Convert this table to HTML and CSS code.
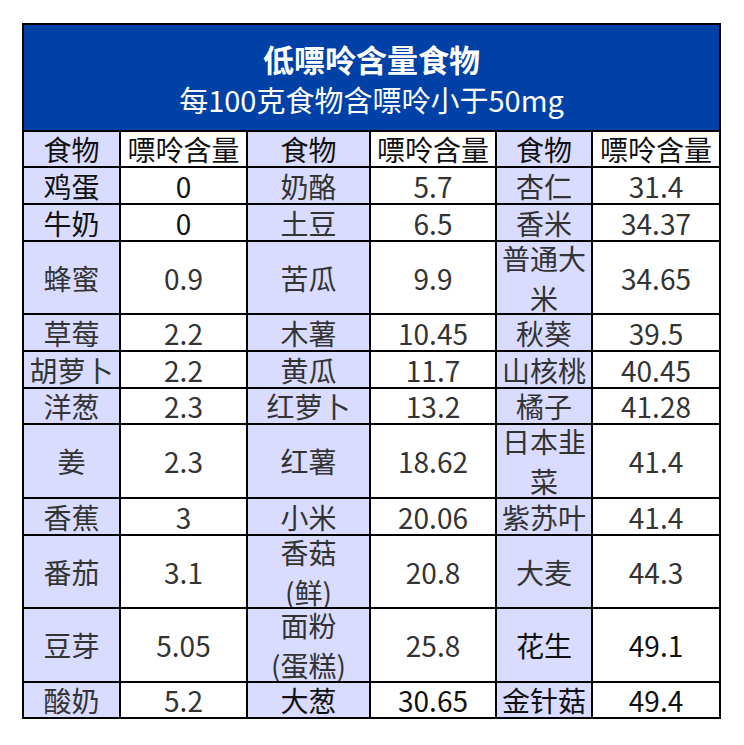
FILE: index.html
```html
<!DOCTYPE html>
<html lang="zh-CN">
<head>
<meta charset="utf-8">
<title>低嘌呤含量食物</title>
<link rel="stylesheet" href="styles.css">
</head>
<body>
<div class="sheet">
  <div class="title">
    <div class="title-main">低嘌呤含量食物</div>
    <div class="title-sub">每100克食物含嘌呤小于50mg</div>
  </div>

  <div class="c name head">食物</div><div class="c val head">嘌呤含量</div>
  <div class="c name head">食物</div><div class="c val head">嘌呤含量</div>
  <div class="c name head">食物</div><div class="c val head">嘌呤含量</div>

  <div class="c name dark">鸡蛋</div><div class="c val dark">0</div>
  <div class="c name">奶酪</div><div class="c val">5.7</div>
  <div class="c name">杏仁</div><div class="c val">31.4</div>

  <div class="c name dark">牛奶</div><div class="c val dark">0</div>
  <div class="c name">土豆</div><div class="c val">6.5</div>
  <div class="c name">香米</div><div class="c val">34.37</div>

  <div class="c name">蜂蜜</div><div class="c val">0.9</div>
  <div class="c name">苦瓜</div><div class="c val">9.9</div>
  <div class="c name wrap">普通大<br>米</div><div class="c val">34.65</div>

  <div class="c name">草莓</div><div class="c val">2.2</div>
  <div class="c name">木薯</div><div class="c val">10.45</div>
  <div class="c name">秋葵</div><div class="c val">39.5</div>

  <div class="c name">胡萝卜</div><div class="c val">2.2</div>
  <div class="c name">黄瓜</div><div class="c val">11.7</div>
  <div class="c name">山核桃</div><div class="c val">40.45</div>

  <div class="c name">洋葱</div><div class="c val">2.3</div>
  <div class="c name">红萝卜</div><div class="c val">13.2</div>
  <div class="c name">橘子</div><div class="c val">41.28</div>

  <div class="c name">姜</div><div class="c val">2.3</div>
  <div class="c name">红薯</div><div class="c val">18.62</div>
  <div class="c name wrap">日本韭<br>菜</div><div class="c val">41.4</div>

  <div class="c name">香蕉</div><div class="c val">3</div>
  <div class="c name">小米</div><div class="c val">20.06</div>
  <div class="c name">紫苏叶</div><div class="c val">41.4</div>

  <div class="c name">番茄</div><div class="c val">3.1</div>
  <div class="c name wrap">香菇<br>(鲜)</div><div class="c val">20.8</div>
  <div class="c name">大麦</div><div class="c val">44.3</div>

  <div class="c name">豆芽</div><div class="c val">5.05</div>
  <div class="c name wrap">面粉<br>(蛋糕)</div><div class="c val">25.8</div>
  <div class="c name dark">花生</div><div class="c val dark">49.1</div>

  <div class="c name">酸奶</div><div class="c val">5.2</div>
  <div class="c name dark">大葱</div><div class="c val dark">30.65</div>
  <div class="c name dark">金针菇</div><div class="c val dark">49.4</div>
</div>
</body>
</html>
```

FILE: styles.css
```css
html, body {
  margin: 0;
  padding: 0;
  background: #ffffff;
}

body {
  font-family: "Noto Sans CJK SC", "Noto Sans", sans-serif;
}

.sheet {
  margin: 23px 0 0 22px;
  width: 699px;
  box-sizing: border-box;
  padding: 2px;
  background: #000000;
  display: grid;
  grid-template-columns: 95px 125px 121px 124px 94px 126px;
  grid-template-rows: 105px 34px 35px 35px 71px 35px 35px 34px 72px 35px 71px 72px 34px;
  gap: 2px;
}

.title {
  grid-column: 1 / -1;
  background: #0041a7;
  color: #ffffff;
  display: flex;
  flex-direction: column;
  align-items: center;
  justify-content: center;
  padding-top: 3px;
  box-sizing: border-box;
}

.title-main {
  font-size: 31px;
  font-weight: 700;
  line-height: 40px;
}

.title-sub {
  font-size: 29px;
  line-height: 40px;
}

.c {
  display: flex;
  align-items: center;
  justify-content: center;
  overflow: hidden;
  text-align: center;
  font-size: 28px;
  line-height: 32px;
  white-space: nowrap;
  color: #333333;
}

.c.wrap {
  line-height: 40px;
}

.name {
  background: #d9dbff;
}

.val {
  background: #ffffff;
}

.head,
.dark {
  color: #111111;
}
```
